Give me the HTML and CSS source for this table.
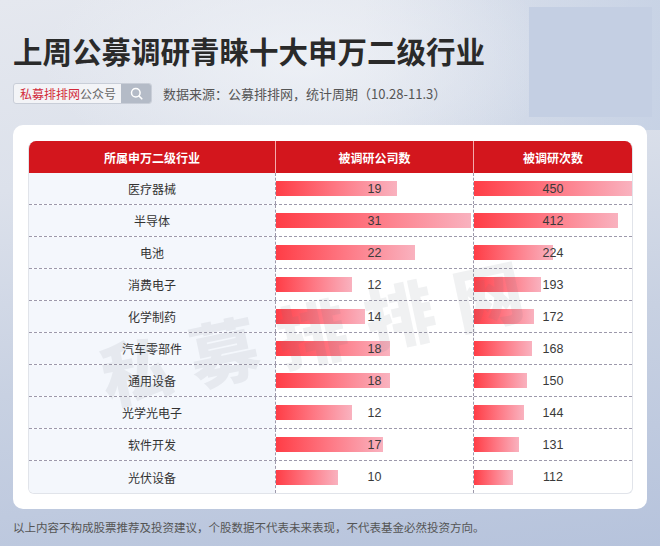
FILE: index.html
```html
<!DOCTYPE html>
<html lang="zh-CN">
<head>
<meta charset="utf-8">
<title>上周公募调研青睐十大申万二级行业</title>
<link rel="stylesheet" href="styles.css">
</head>
<body>
<div class="page">
  <h1 class="title">上周公募调研青睐十大申万二级行业</h1>
  <div class="meta">
    <div class="search">
      <span class="search-text"><span class="brand">私募排排网</span>公众号</span>
      <span class="search-btn">
        <svg width="13" height="13" viewBox="0 0 13 13"><circle cx="5.8" cy="5.8" r="4.3" fill="none" stroke="#fff" stroke-width="1.5"/><line x1="9" y1="9" x2="11.8" y2="11.8" stroke="#fff" stroke-width="1.6" stroke-linecap="round"/></svg>
      </span>
    </div>
    <span class="source">数据来源：公募排排网，统计周期（10.28-11.3）</span>
  </div>
  <div class="card">
    <div class="table">
      <div class="row head">
        <div class="cell c1">所属申万二级行业</div>
        <div class="cell c2">被调研公司数</div>
        <div class="cell c3">被调研次数</div>
      </div>
      <div class="row"><div class="cell c1">医疗器械</div><div class="cell c2 barcell"><span class="bar" style="width:121px"></span><span class="num">19</span></div><div class="cell c3 barcell"><span class="bar" style="width:158px"></span><span class="num">450</span></div></div>
      <div class="row"><div class="cell c1">半导体</div><div class="cell c2 barcell"><span class="bar" style="width:195px"></span><span class="num">31</span></div><div class="cell c3 barcell"><span class="bar" style="width:144px"></span><span class="num">412</span></div></div>
      <div class="row"><div class="cell c1">电池</div><div class="cell c2 barcell"><span class="bar" style="width:139px"></span><span class="num">22</span></div><div class="cell c3 barcell"><span class="bar" style="width:79px"></span><span class="num">224</span></div></div>
      <div class="row"><div class="cell c1">消费电子</div><div class="cell c2 barcell"><span class="bar" style="width:76px"></span><span class="num">12</span></div><div class="cell c3 barcell"><span class="bar" style="width:67px"></span><span class="num">193</span></div></div>
      <div class="row"><div class="cell c1">化学制药</div><div class="cell c2 barcell"><span class="bar" style="width:89px"></span><span class="num">14</span></div><div class="cell c3 barcell"><span class="bar" style="width:60px"></span><span class="num">172</span></div></div>
      <div class="row"><div class="cell c1">汽车零部件</div><div class="cell c2 barcell"><span class="bar" style="width:114px"></span><span class="num">18</span></div><div class="cell c3 barcell"><span class="bar" style="width:58px"></span><span class="num">168</span></div></div>
      <div class="row"><div class="cell c1">通用设备</div><div class="cell c2 barcell"><span class="bar" style="width:114px"></span><span class="num">18</span></div><div class="cell c3 barcell"><span class="bar" style="width:53px"></span><span class="num">150</span></div></div>
      <div class="row"><div class="cell c1">光学光电子</div><div class="cell c2 barcell"><span class="bar" style="width:76px"></span><span class="num">12</span></div><div class="cell c3 barcell"><span class="bar" style="width:50px"></span><span class="num">144</span></div></div>
      <div class="row"><div class="cell c1">软件开发</div><div class="cell c2 barcell"><span class="bar" style="width:107px"></span><span class="num">17</span></div><div class="cell c3 barcell"><span class="bar" style="width:45px"></span><span class="num">131</span></div></div>
      <div class="row last"><div class="cell c1">光伏设备</div><div class="cell c2 barcell"><span class="bar" style="width:62px"></span><span class="num">10</span></div><div class="cell c3 barcell"><span class="bar" style="width:39px"></span><span class="num">112</span></div></div>
    </div>
    <div class="watermark">私募排排网</div>
  </div>
  <p class="footer">以上内容不构成股票推荐及投资建议，个股数据不代表未来表现，不代表基金必然投资方向。</p>
</div>
</body>
</html>
```
FILE: styles.css
```css
html, body {
  margin: 0;
  padding: 0;
}
body {
  width: 660px;
  height: 546px;
  overflow: hidden;
  font-family: "Noto Sans CJK SC", "Noto Sans", sans-serif;
  color: #333;
  background:
    linear-gradient(#c4cfe3, #c4cfe3) 529px 7px / 123px 110px no-repeat,
    radial-gradient(ellipse 260px 120px at 300px 60px, rgba(240,243,248,0.8), rgba(240,243,248,0)),
    linear-gradient(90deg, rgba(196,208,228,0) 55%, rgba(196,208,228,0.85) 100%) 0 0 / 660px 130px no-repeat,
    linear-gradient(172deg, #e5e8ef 0%, #dce1eb 30%, #c8d1e2 62%, #b6c3dc 100%);
}
.page {
  padding: 33px 0 0 13px;
}
.title {
  margin: 0;
  font-size: 29.5px;
  line-height: 35px;
  font-weight: 700;
  color: #2a2a2a;
  letter-spacing: 0;
}
.meta {
  margin-top: 15px;
  display: flex;
  align-items: center;
  height: 21px;
}
.search {
  display: flex;
  width: 139px;
  height: 21px;
  border: 1px solid #c9ced8;
  border-radius: 3px;
  overflow: hidden;
  box-sizing: border-box;
  background: #f3f4f7;
}
.search-text {
  flex: 1;
  font-size: 12px;
  line-height: 19px;
  padding-left: 6px;
  color: #666;
  white-space: nowrap;
}
.brand {
  color: #d22a3a;
}
.search-btn {
  width: 30px;
  background: #b4bbc7;
  display: flex;
  align-items: center;
  justify-content: center;
}
.source {
  margin-left: 11px;
  font-size: 13px;
  color: #555;
  white-space: nowrap;
}
.card {
  position: relative;
  margin-top: 21px;
  width: 634px;
  box-sizing: border-box;
  padding: 16px 15px 15px 16px;
  background: #fff;
  border-radius: 10px;
  overflow: hidden;
}
.table {
  border: 1px solid #e1e4ea;
  border-top: 0;
  border-radius: 8px 8px 6px 6px;
  overflow: hidden;
  margin: 0 -1px;
}
.row {
  display: grid;
  grid-template-columns: 246px 198px 1fr;
  height: 32px;
  box-sizing: border-box;
  border-bottom: 1px dashed #9d99ab;
}
.row.last {
  border-bottom: 0;
}
.row.head {
  background: #d3161d;
  border-bottom: 0;
}
.cell {
  display: flex;
  align-items: center;
  justify-content: center;
  font-size: 12px;
}
.head .cell {
  color: #fff;
  font-weight: 700;
}
.head .c2, .head .c3 {
  border-left: 1px solid rgba(255, 220, 220, 0.75);
}
.row:not(.head) .c1 {
  background: #f4f7fc;
}
.row:not(.head) .c2, .row:not(.head) .c3 {
  border-left: 1px dashed #9d99ab;
}
.cell.barcell {
  display: grid;
  grid-template-columns: 100%;
  justify-content: stretch;
  align-items: center;
  justify-items: center;
}
.bar, .num {
  grid-row: 1;
  grid-column: 1;
}
.bar {
  justify-self: start;
  height: 15px;
  background: linear-gradient(90deg, #ff3d46 0%, #fe7884 50%, #f9b2bf 100%);
}
.num {
  position: relative;
  font-family: "Liberation Sans", "Noto Sans", sans-serif;
  font-size: 12.5px;
  color: #3a3a3a;
}
.watermark {
  position: absolute;
  left: 308px;
  top: 203px;
  transform: translate(-50%, -50%) rotate(-12deg);
  font-size: 70px;
  font-weight: 900;
  letter-spacing: 20px;
  color: rgba(110, 115, 130, 0.1);
  white-space: nowrap;
  pointer-events: none;
}
.footer {
  margin: 10px 0 0;
  font-size: 11.5px;
  line-height: 16px;
  color: #555;
  white-space: nowrap;
}
```
